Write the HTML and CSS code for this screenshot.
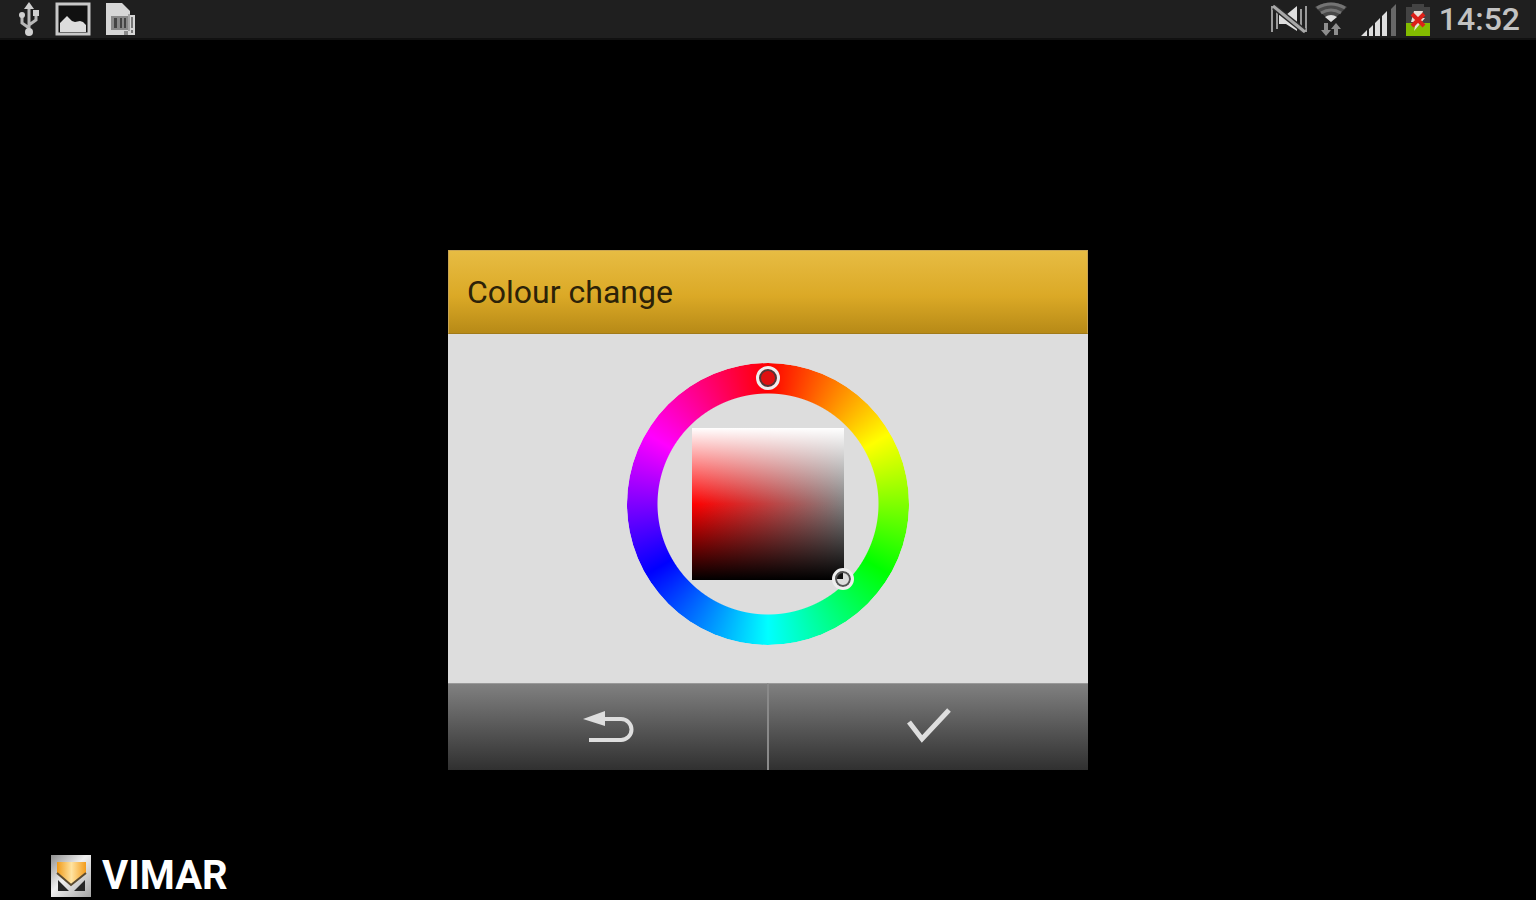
FILE: index.html
```html
<!DOCTYPE html>
<html lang="en">
<head>
  <meta charset="UTF-8">
  <meta name="viewport" content="width=device-width, initial-scale=1.0">
  <title>Colour change</title>
  <link rel="stylesheet" href="styles.css">
</head>
<body>
  <header class="status-bar">
    <div class="status-group notifications">
      <svg width="22" height="34" viewBox="0 0 22 34" role="img" aria-label="USB connected">
        <g fill="none" stroke="#b8b8b8" stroke-width="3">
          <path d="M11 5v24M11 26l-7-5v-7M11 23l7-5v-5"/>
        </g>
        <g fill="#cfcfcf">
          <path d="M11 0l5 7H6z"/>
          <circle cx="11" cy="30" r="4"/>
          <circle cx="4" cy="13" r="3"/>
          <path d="M15 8h6v6h-6z"/>
        </g>
      </svg>
      <svg width="36" height="34" viewBox="0 0 36 34" role="img" aria-label="Screenshot saved">
        <rect x="2" y="2" width="32" height="30" fill="#111" stroke="#c8c8c8" stroke-width="3"/>
        <path d="M5 21l3-3 4-4 5 5 3 1 5-1 3 1 3 3v7H5z" fill="#dcdcdc"/>
      </svg>
      <svg width="30" height="34" viewBox="0 0 30 34" role="img" aria-label="SIM card">
        <path d="M0 1h16l8 8v4h5v20H0z" fill="#d6d6d6"/>
        <rect x="5" y="14" width="17" height="14" fill="#888"/>
        <path d="M8 16h3v10H8zM14 16h2v10h-2zM18 16h2v10h-2z" fill="#444"/>
        <path d="M22 12h2v17h-2z" fill="#a5a5a5"/>
        <path d="M25 15h2v11h-2zM25 28h2v3h-2z" fill="#777"/>
        <path d="M18 29h4v4h-4z" fill="#8a8a8a"/>
      </svg>
    </div>
    <div class="status-group indicators">
      <svg class="mute" width="36" height="30" viewBox="0 0 36 30" role="img" aria-label="Muted">
        <path d="M8 11h7l11-9v25l-11-7H8z" fill="#dedede"/>
        <path d="M1 2v26M6 4v21M30 5v20M35 2v26" stroke="#9a9a9a" stroke-width="2"/>
        <path d="M3 3l30 24" stroke="#2a2a2a" stroke-width="6"/>
        <path d="M2 2l32 26" stroke="#a8a8a8" stroke-width="3"/>
      </svg>
      <svg class="wifi" width="32" height="34" viewBox="0 0 32 34" role="img" aria-label="Wi-Fi">
        <path d="M0 5q16-9 32 0L16 20z" fill="#484848"/>
        <g fill="none" stroke="#747474" stroke-width="3">
          <path d="M2 6q14-8 28 0"/>
          <path d="M6 11q10-6 20 0"/>
        </g>
        <path d="M10 15q6-4 12 0l-6 5z" fill="#dedede"/>
        <path d="M9 21h4v7h3l-5 6-5-6h3zM19 33v-6h-3l5-6 5 6h-3v6z" fill="#8d8d8d"/>
      </svg>
      <svg class="signal" width="36" height="32" viewBox="0 0 36 32" role="img" aria-label="Signal strength">
        <path d="M0 32l6-6v6zM8 25l4-4v11H8zM14 19l5-5v18h-5zM21 12l5-5v25h-5z" fill="#dedede"/>
        <path d="M30 5l5-5v32h-5z" fill="#686868"/>
      </svg>
      <svg class="battery" width="26" height="32" viewBox="0 0 26 32" role="img" aria-label="Battery not charging">
        <path d="M7 0h12v3h6v29H1V3h6z" fill="#434343"/>
        <path d="M1 19h24v13H1z" fill="#83bb00"/>
        <path d="M9 7h9l-2 7h4L9 27l2-9H6z" fill="#e8e0d8"/>
        <path d="M7 10l12 12M19 10L7 22" stroke="#dc2018" stroke-width="4"/>
      </svg>
      <time class="clock">14:52</time>
    </div>
  </header>

  <main class="stage">
    <section class="dialog" role="dialog" aria-labelledby="dialog-title">
      <h1 class="dialog-title" id="dialog-title">Colour change</h1>
      <div class="dialog-body">
        <div class="picker">
          <div class="hue-ring"></div>
          <div class="shade-square">
            <button class="marker shade-marker" type="button" aria-label="Saturation and lightness"></button>
          </div>
          <button class="marker hue-marker" type="button" aria-label="Hue"></button>
        </div>
      </div>
      <div class="dialog-actions">
        <button class="action" type="button" aria-label="Back">
          <svg width="52" height="34" viewBox="0 0 52 34">
            <path d="M20 10h19a10 10 0 0 1 0 21H7" fill="none" stroke="#dedede" stroke-width="4"/>
            <path d="M1 10L23 2v15z" fill="#dedede"/>
          </svg>
        </button>
        <button class="action" type="button" aria-label="Confirm">
          <svg width="44" height="36" viewBox="0 0 44 36">
            <path d="M2 14l13 17L42 2" fill="none" stroke="#dedede" stroke-width="5"/>
          </svg>
        </button>
      </div>
    </section>
  </main>

  <footer class="brand">
    <svg width="40" height="42" viewBox="0 0 40 42" aria-hidden="true">
      <defs>
        <linearGradient id="silver" x1="0" x2="1" y1="0" y2="1">
          <stop offset="0" stop-color="#8f8f8f"/>
          <stop offset="0.45" stop-color="#f0f0f0"/>
          <stop offset="1" stop-color="#a4a4a4"/>
        </linearGradient>
        <linearGradient id="amber">
          <stop offset="0" stop-color="#f09a18"/>
          <stop offset="0.5" stop-color="#ffe3a0"/>
          <stop offset="1" stop-color="#f39c1c"/>
        </linearGradient>
      </defs>
      <rect width="40" height="42" fill="url(#silver)"/>
      <path d="M6 7h29v11L20 30 6 18z" fill="url(#amber)"/>
      <path d="M6 18l14 12 15-12" fill="none" stroke="#5a4a30" stroke-width="2"/>
      <path d="M7 25l11 11H7zM34 25L23 36h11z" fill="#262626"/>
    </svg>
    <span class="brand-name">VIMAR</span>
  </footer>
</body>
</html>
```
FILE: styles.css
```css
* {
  box-sizing: border-box;
}

body {
  display: flex;
  flex-direction: column;
  min-height: 100vh;
  margin: 0;
  background: #000;
  color: #fff;
  font-family: Roboto, "Noto Sans", sans-serif;
}

button {
  padding: 0;
  border: none;
  cursor: pointer;
}

svg {
  display: block;
  flex: none;
}

/* status bar */
.status-bar {
  display: flex;
  align-items: center;
  justify-content: space-between;
  height: 40px;
  padding: 0 16px 0 18px;
  background: #1f1f1f;
  border-bottom: 2px solid #111;
}

.status-group {
  display: flex;
  align-items: center;
}

.notifications {
  gap: 15px;
}

.indicators {
  gap: 8px;
}

.signal {
  margin-left: 6px;
}

.battery {
  margin-top: 2px;
}

.signal {
  margin-top: 2px;
}

.clock {
  color: #c2c2c2;
  font-size: 32px;
  font-weight: 500;
  line-height: 38px;
}

/* dialog */
.stage {
  display: flex;
  flex: 1;
  align-items: center;
  justify-content: center;
  padding-top: 128px;
}

.dialog {
  width: 100%;
  max-width: 640px;
}

.dialog-title {
  margin: 0;
  padding: 22px 18px;
  background: linear-gradient(#e7bc43, #dba926 55%, #b78a17);
  border: 1px solid #c9a552;
  border-bottom-color: #a17a18;
  color: #2c2208;
  font-size: 32px;
  font-weight: 400;
  line-height: 38px;
}

.dialog-body {
  display: flex;
  justify-content: center;
  padding: 29px 0 38px;
  background: #ddd;
}

.picker {
  position: relative;
  display: grid;
  place-items: center;
  width: 282px;
  height: 282px;
}

.hue-ring {
  grid-area: 1 / 1;
  width: 100%;
  height: 100%;
  border-radius: 50%;
  background: conic-gradient(#f00, #ff0, #0f0, #0ff, #00f, #f0f, #f00);
  mask: radial-gradient(circle, transparent 110px, #000 111px);
}

.shade-square {
  position: relative;
  grid-area: 1 / 1;
  width: 152px;
  height: 152px;
  background:
    linear-gradient(#fff, rgba(255, 255, 255, 0) 50%, rgba(0, 0, 0, 0) 50%, #000),
    linear-gradient(to right, #f00, #808080);
}

.marker {
  position: absolute;
  border-radius: 50%;
  border: 3px solid #eee;
}

.hue-marker {
  top: 3px;
  left: 129px;
  width: 24px;
  height: 24px;
  background: #e01010;
  box-shadow: inset 0 0 0 2px #503838;
}

.shade-marker {
  right: -10px;
  bottom: -10px;
  width: 22px;
  height: 22px;
  background: conic-gradient(#ddd 75%, #111 75%);
  box-shadow: inset 0 0 0 2px #555;
}

.dialog-actions {
  display: flex;
}

.action {
  display: flex;
  flex: 1;
  align-items: center;
  justify-content: center;
  height: 87px;
  padding-bottom: 2px;
  background: linear-gradient(#808080, #303030);
  border-top: 1px solid #999;
}

.action + .action {
  border-left: 2px solid #8a8a8a;
}

/* brand */
.brand {
  display: flex;
  align-items: center;
  gap: 11px;
  height: 48px;
  padding-left: 51px;
}

.brand-name {
  font-size: 40px;
  font-weight: 700;
  line-height: 48px;
}
```
